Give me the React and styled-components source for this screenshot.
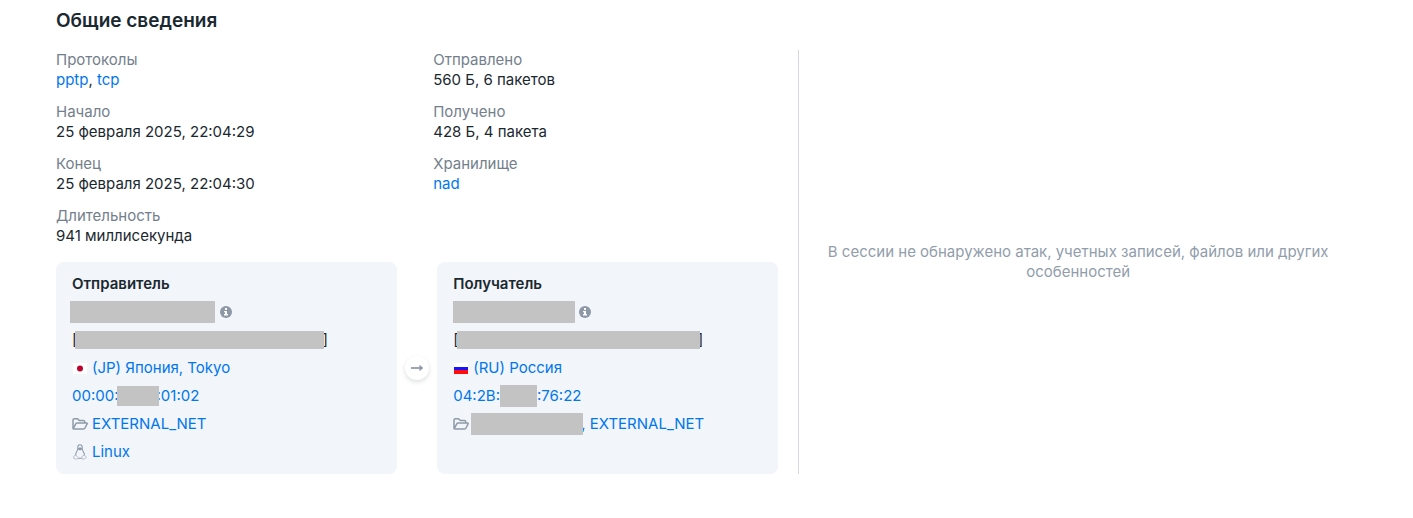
import styled, { createGlobalStyle } from "styled-components";

const GlobalStyle = createGlobalStyle`
  body {
    margin: 0;
    background: #fff;
    color: #1a2830;
    font-family: Inter, "Open Sans", sans-serif;
    font-size: 15px;
    line-height: 20px;
  }
`;

const Page = styled.main`
  padding: 9px 56px 44px;
`;

const Title = styled.h2`
  margin: 0 0 17px;
  font-size: 19px;
  font-weight: 600;
  line-height: 24px;
`;

const Columns = styled.div`
  display: grid;
  grid-template-columns: 4fr 3fr;
`;

const Session = styled.section`
  padding-right: 20px;
  border-right: 1px solid #d3d9e4;
`;

const Fields = styled.div`
  display: grid;
  grid-template-columns: 1fr 1fr;
  gap: 32px;
  margin-bottom: 16px;
`;

const FieldList = styled.dl`
  display: flex;
  flex-direction: column;
  gap: 12px;
  margin: 0;
`;

const Label = styled.dt`
  color: #73808c;
`;

const Value = styled.dd`
  margin: 0;
`;

const Link = styled.a`
  color: #0077ee;
  text-decoration: none;

  &:hover {
    text-decoration: underline;
  }
`;

const Hosts = styled.div`
  display: flex;
  gap: 8px;
`;

const Card = styled.article`
  flex: 1;
  min-width: 0;
  padding: 8px 16px;
  border-radius: 8px;
  background: #f2f5fa;
`;

const CardTitle = styled.h3`
  margin: 0;
  font-size: 15px;
  font-weight: 600;
  line-height: 28px;
`;

const Row = styled.div`
  display: flex;
  align-items: center;
  gap: ${(props) => props.$gap || "0"};
  height: 28px;
  white-space: nowrap;
`;

const Group = styled.span`
  display: flex;
  align-items: center;
`;

// covers private data; $overlap lets it run over the text around it
const Mask = styled.span`
  z-index: 1;
  flex: none;
  width: ${(props) => props.$width};
  height: ${(props) => props.$height || "22px"};
  margin: 0 ${(props) => (props.$overlap ? "-2px" : "0")};
  background: #c3c3c3;
`;

const Info = styled.button`
  display: flex;
  margin: 0;
  padding: 0;
  border: 0;
  background: none;
  cursor: pointer;
`;

const Icon = styled.svg`
  display: block;
  flex: none;
`;

const Direction = styled.div`
  display: flex;
  flex: none;
  align-items: center;
  justify-content: center;
  align-self: center;
  width: 24px;
  height: 24px;
  border-radius: 50%;
  background: #fff;
  box-shadow: 0 2px 4px rgba(27, 39, 51, 0.15);
`;

const Empty = styled.aside`
  display: flex;
  align-items: center;
  justify-content: center;
  padding: 0 16px;
  color: #919dab;
  text-align: center;
`;

function InfoIcon() {
  return (
    <Icon width="12" height="12" viewBox="0 0 12 12">
      <circle cx="6" cy="6" r="6" fill="#8c98a6" />
      <path d="M5 2h2v2H5zM4 5h3v3h1v1.500H4V8h1V6.300H4z" fill="#fff" />
    </Icon>
  );
}

function FolderIcon() {
  return (
    <Icon width="16" height="16" viewBox="0 0 16 16" fill="none" stroke="#8f9ba8">
      <path
        d="M1 12.500V4Q1 2.700 2.300 2.700H5.500L7.200 4.400H11.500Q12.700 4.400 12.700 5.600V7M1.200 12.700L3.900 7.700Q4.200 7 5 7H14.500Q15.500 7 15.100 7.900L13 12Q12.600 13 11.600 13H2Q1 13 1 12.500"
        strokeWidth="1.500"
        strokeLinejoin="round"
      />
    </Icon>
  );
}

function LinuxIcon() {
  return (
    <Icon width="16" height="16" viewBox="0 0 16 16" fill="none" stroke="#8f9ba8">
      <path
        d="M5.800 5V3Q5.900 .7 8 .7T10.200 3V5Q10.400 6.300 11.500 8Q12.600 10 12.300 11.500M5.800 5Q5.600 6.300 4.500 8Q3.400 10 3.700 11.500M6 14.200H10"
        strokeWidth="1.100"
      />
      <path d="M6 4.200L8 3.300L10 4.200V5.500L8 6.500L6 5.500Z" fill="#8f9ba8" stroke="none" />
      <path
        d="M3.700 11L6.200 13.500Q6 15.500 4.500 15.200L1.500 14.300L2 12ZM12.300 11L10 12.500V14.500Q10.500 15.700 12 15L14.500 13.500L13.300 12Z"
        stroke="#b5bdc7"
        strokeWidth=".9"
      />
    </Icon>
  );
}

function FlagJapan() {
  return (
    <Icon width="16" height="12" viewBox="0 0 16 12">
      <path d="M1 1h14v11H1z" fill="#fff" />
      <circle cx="8" cy="6.500" r="3" fill="#bc0030" />
    </Icon>
  );
}

function FlagRussia() {
  return (
    <Icon width="16" height="12" viewBox="0 0 16 12">
      <path d="M1 1h14v4H1z" fill="#fff" />
      <path d="M1 5h14v3H1z" fill="#1414ff" />
      <path d="M1 8h14v4H1z" fill="#fd0d0d" />
    </Icon>
  );
}

function ArrowIcon() {
  return (
    <Icon width="14" height="12" viewBox="0 0 14 12">
      <path d="M1 6H12" stroke="#8b97a3" strokeWidth="1.700" />
      <path d="M9.500 2.800L13.200 6L9.500 9.200Z" fill="#8b97a3" />
    </Icon>
  );
}

function Field({ label, children }) {
  return (
    <div>
      <Label>{label}</Label>
      <Value>{children}</Value>
    </div>
  );
}

export default function App() {
  return (
    <Page>
      <GlobalStyle />
      <Title>Общие сведения</Title>

      <Columns>
        <Session>
          <Fields>
            <FieldList>
              <Field label="Протоколы">
                <Link href="#pptp">pptp</Link>, <Link href="#tcp">tcp</Link>
              </Field>
              <Field label="Начало">25 февраля 2025, 22:04:29</Field>
              <Field label="Конец">25 февраля 2025, 22:04:30</Field>
              <Field label="Длительность">941 миллисекунда</Field>
            </FieldList>

            <FieldList>
              <Field label="Отправлено">560 Б, 6 пакетов</Field>
              <Field label="Получено">428 Б, 4 пакета</Field>
              <Field label="Хранилище">
                <Link href="#nad">nad</Link>
              </Field>
            </FieldList>
          </Fields>

          <Hosts>
            <Card>
              <CardTitle>Отправитель</CardTitle>
              <Row $gap="7px">
                <Mask $width="145px" $overlap />
                <Info type="button" aria-label="Подробнее об отправителе">
                  <InfoIcon />
                </Info>
              </Row>
              <Row>
                [<Mask $width="249px" $height="18px" $overlap />]
              </Row>
              <Row $gap="4px">
                <FlagJapan />
                <Link href="#jp">(JP) Япония, Tokyo</Link>
              </Row>
              <Row>
                <Link href="#mac-src">00:00:</Link>
                <Mask $width="42px" $height="20px" $overlap />
                <Link href="#mac-src">:01:02</Link>
              </Row>
              <Row $gap="4px">
                <FolderIcon />
                <Link href="#external">EXTERNAL_NET</Link>
              </Row>
              <Row $gap="4px">
                <LinuxIcon />
                <Link href="#linux">Linux</Link>
              </Row>
            </Card>

            <Direction>
              <ArrowIcon />
            </Direction>

            <Card>
              <CardTitle>Получатель</CardTitle>
              <Row $gap="4px">
                <Mask $width="122px" />
                <Info type="button" aria-label="Подробнее о получателе">
                  <InfoIcon />
                </Info>
              </Row>
              <Row>
                [<Mask $width="243px" $height="18px" $overlap />]
              </Row>
              <Row $gap="4px">
                <FlagRussia />
                <Link href="#ru">(RU) Россия</Link>
              </Row>
              <Row>
                <Link href="#mac-dst">04:2B:</Link>
                <Mask $width="37px" />
                <Link href="#mac-dst">:76:22</Link>
              </Row>
              <Row $gap="4px">
                <FolderIcon />
                <Group>
                  <Mask $width="112px" $overlap />
                  <Link href="#external">, EXTERNAL_NET</Link>
                </Group>
              </Row>
            </Card>
          </Hosts>
        </Session>

        <Empty>
          В сессии не обнаружено атак, учетных записей, файлов или других
          особенностей
        </Empty>
      </Columns>
    </Page>
  );
}
